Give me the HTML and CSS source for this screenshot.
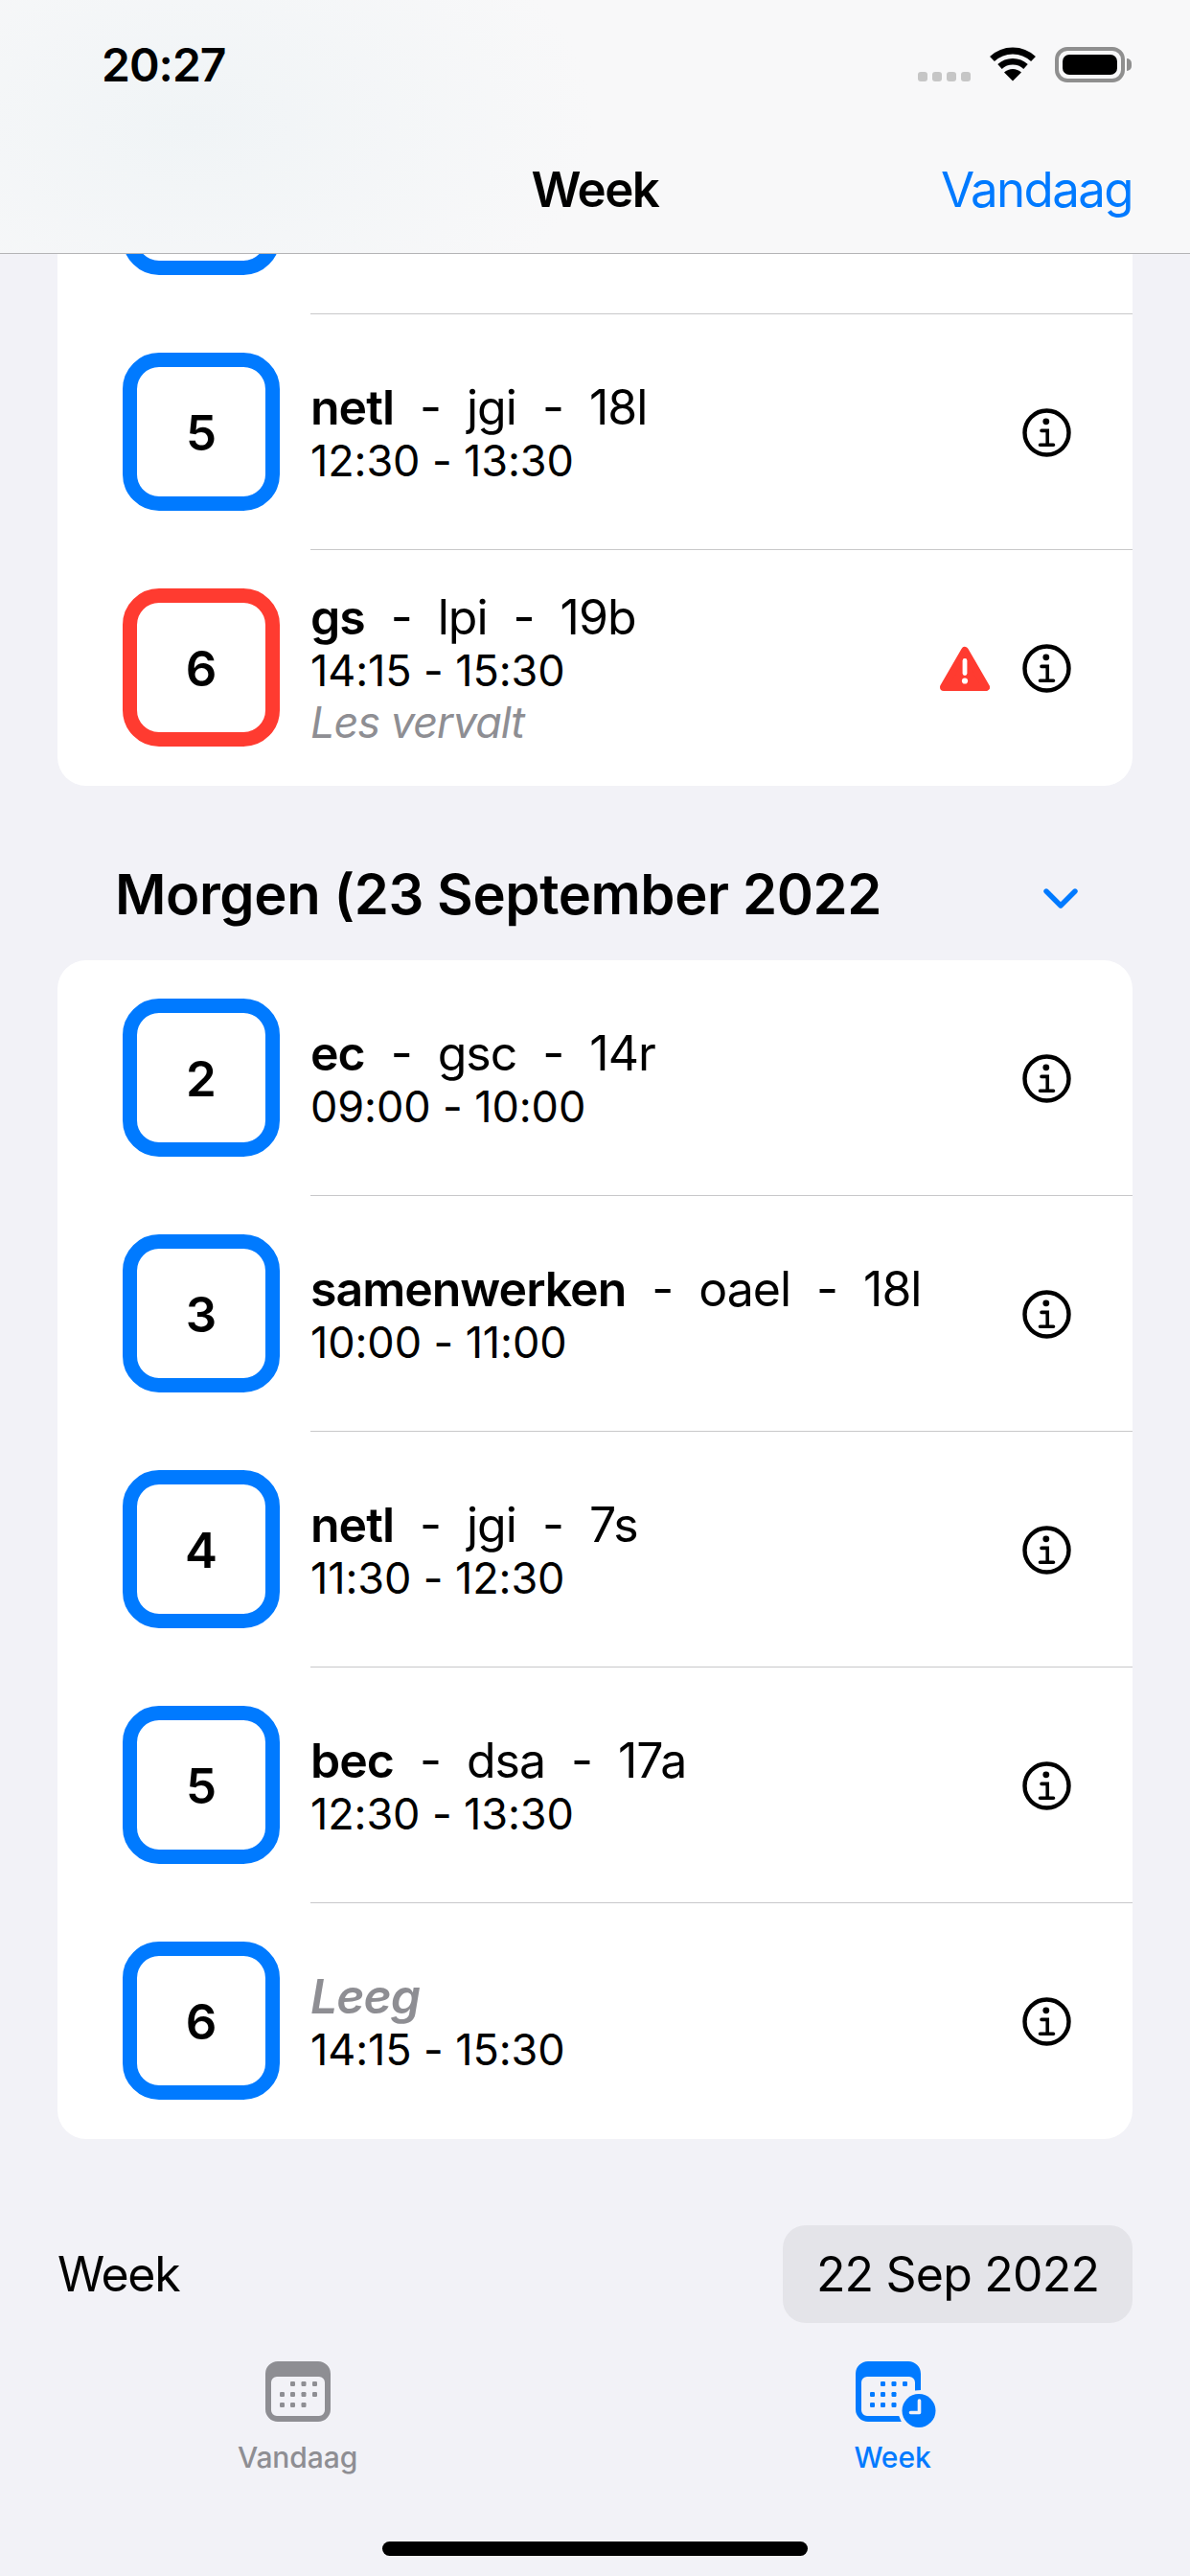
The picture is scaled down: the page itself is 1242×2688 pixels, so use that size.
FILE: index.html
```html
<!DOCTYPE html>
<html lang="nl">

<head>
  <meta charset="UTF-8">
  <meta name="viewport" content="width=device-width, initial-scale=1.0">

  <title>Week</title>
  <link rel="stylesheet" href="styles.css">
</head>

<body>
  <svg class="defs" width="0" height="0" aria-hidden="true">
    <symbol id="info" viewBox="0 0 51 51">
      <circle cx="25.5" cy="25.5" r="23" fill="none" stroke="currentColor" stroke-width="4.4"/>
      <circle cx="24.8" cy="13.8" r="3.4" fill="currentColor"/>
      <path d="M20 23.4h6.2v14.8M18.5 38.2h14" fill="none" stroke="currentColor" stroke-width="3.6" stroke-linecap="round"/>
    </symbol>
    <symbol id="warning" viewBox="0 0 52 48">
      <path d="M26 5 L48 43 H4 Z" fill="#ff3b30" stroke="#ff3b30" stroke-width="8" stroke-linejoin="round"/>
      <rect x="23.6" y="13" width="4.8" height="18" rx="2.4" fill="#fff"/>
      <circle cx="26" cy="36.5" r="3.1" fill="#fff"/>
    </symbol>
  </svg>

  <header class="nav">
    <div class="status">
      <span class="clock">20:27</span>
      <div class="status-icons">
        <div class="signal"><i></i><i></i><i></i><i></i></div>
        <svg class="wifi" viewBox="0 0 48 36" width="48" height="36">
          <path d="M2.5 12.5C14.5 1 33.5 1 45.5 12.5" fill="none" stroke="#000" stroke-width="7"/>
          <path d="M10.5 20.5C18 13.5 30 13.5 37.5 20.5" fill="none" stroke="#000" stroke-width="6.5"/>
          <path d="M24 35.5L15 26.5C20 21.8 28 21.8 33 26.5Z" fill="#000"/>
        </svg>
        <div class="battery"><div class="battery-fill"></div></div>
      </div>
    </div>
    <div class="nav-row">
      <span></span>
      <h1 class="nav-title">Week</h1>
      <a class="nav-action">Vandaag</a>
    </div>
  </header>

  <main class="content">
    <section class="card">
      <div class="row">
        <div class="period"></div>
        <div class="row-body"></div>
      </div>
      <div class="row">
        <div class="period">5</div>
        <div class="row-body">
          <div class="lesson">
            <div class="lesson-title"><b>netl</b><span>-</span><span>jgi</span><span>-</span><span>18l</span></div>
            <div class="lesson-time">12:30 - 13:30</div>
          </div>
          <svg class="info"><use href="#info"/></svg>
        </div>
      </div>
      <div class="row">
        <div class="period period-red">6</div>
        <div class="row-body">
          <div class="lesson">
            <div class="lesson-title"><b>gs</b><span>-</span><span>lpi</span><span>-</span><span>19b</span></div>
            <div class="lesson-time">14:15 - 15:30</div>
            <div class="lesson-note">Les vervalt</div>
          </div>
          <svg class="warning"><use href="#warning"/></svg>
          <svg class="info"><use href="#info"/></svg>
        </div>
      </div>
    </section>

    <div class="day-header">
      <h2 class="day-title">Morgen (23 September 2022</h2>
      <svg class="chevron" viewBox="0 0 36 21" width="36" height="21">
        <path d="M3 3L18 18L33 3" fill="none" stroke="#007aff" stroke-width="5.4" stroke-linecap="round" stroke-linejoin="round"/>
      </svg>
    </div>

    <section class="card">
      <div class="row">
        <div class="period">2</div>
        <div class="row-body">
          <div class="lesson">
            <div class="lesson-title"><b>ec</b><span>-</span><span>gsc</span><span>-</span><span>14r</span></div>
            <div class="lesson-time">09:00 - 10:00</div>
          </div>
          <svg class="info"><use href="#info"/></svg>
        </div>
      </div>
      <div class="row">
        <div class="period">3</div>
        <div class="row-body">
          <div class="lesson">
            <div class="lesson-title"><b>samenwerken</b><span>-</span><span>oael</span><span>-</span><span>18l</span></div>
            <div class="lesson-time">10:00 - 11:00</div>
          </div>
          <svg class="info"><use href="#info"/></svg>
        </div>
      </div>
      <div class="row">
        <div class="period">4</div>
        <div class="row-body">
          <div class="lesson">
            <div class="lesson-title"><b>netl</b><span>-</span><span>jgi</span><span>-</span><span>7s</span></div>
            <div class="lesson-time">11:30 - 12:30</div>
          </div>
          <svg class="info"><use href="#info"/></svg>
        </div>
      </div>
      <div class="row">
        <div class="period">5</div>
        <div class="row-body">
          <div class="lesson">
            <div class="lesson-title"><b>bec</b><span>-</span><span>dsa</span><span>-</span><span>17a</span></div>
            <div class="lesson-time">12:30 - 13:30</div>
          </div>
          <svg class="info"><use href="#info"/></svg>
        </div>
      </div>
      <div class="row">
        <div class="period">6</div>
        <div class="row-body">
          <div class="lesson">
            <div class="lesson-title"><em class="empty">Leeg</em></div>
            <div class="lesson-time">14:15 - 15:30</div>
          </div>
          <svg class="info"><use href="#info"/></svg>
        </div>
      </div>
    </section>

    <div class="week-picker">
      <span class="week-label">Week</span>
      <span class="date-pill">22 Sep 2022</span>
    </div>
  </main>

  <nav class="tabs">
    <div class="tab">
      <svg class="tab-icon" viewBox="0 0 84 70" width="84" height="70">
        <path fill-rule="evenodd" fill="#8e8e93" d="M21 0h42a13 13 0 0 1 13 13v37a13 13 0 0 1-13 13H21a13 13 0 0 1-13-13V13A13 13 0 0 1 21 0ZM20 16a6 6 0 0 0-6 6v29a6 6 0 0 0 6 6h44a6 6 0 0 0 6-6V22a6 6 0 0 0-6-6Z"/>
        <g fill="#8e8e93">
          <rect x="34" y="21" width="5" height="5" rx="1.2"/><rect x="45.5" y="21" width="5" height="5" rx="1.2"/><rect x="57" y="21" width="5" height="5" rx="1.2"/>
          <rect x="23" y="32" width="5" height="5" rx="1.2"/><rect x="34" y="32" width="5" height="5" rx="1.2"/><rect x="45.5" y="32" width="5" height="5" rx="1.2"/><rect x="57" y="32" width="5" height="5" rx="1.2"/>
          <rect x="23" y="43" width="5" height="5" rx="1.2"/><rect x="34" y="43" width="5" height="5" rx="1.2"/><rect x="45.5" y="43" width="5" height="5" rx="1.2"/>
        </g>
      </svg>
      <span class="tab-label">Vandaag</span>
    </div>
    <div class="tab tab-active">
      <svg class="tab-icon" viewBox="0 0 84 70" width="84" height="70">
        <path fill="#007aff" d="M21 0h42a13 13 0 0 1 13 13v17l-6 .4V22a6 6 0 0 0-6-6H20a6 6 0 0 0-6 6v29a6 6 0 0 0 6 6h33.2l2.6 6H21a13 13 0 0 1-13-13V13A13 13 0 0 1 21 0Z"/>
        <g fill="#007aff">
          <rect x="34" y="21" width="5" height="5" rx="1.2"/><rect x="45.5" y="21" width="5" height="5" rx="1.2"/><rect x="57" y="21" width="5" height="5" rx="1.2"/>
          <rect x="23" y="32" width="5" height="5" rx="1.2"/><rect x="34" y="32" width="5" height="5" rx="1.2"/><rect x="45.5" y="32" width="5" height="5" rx="1.2"/>
          <rect x="23" y="43" width="5" height="5" rx="1.2"/><rect x="34" y="43" width="5" height="5" rx="1.2"/><rect x="45.5" y="43" width="5" height="5" rx="1.2"/>
        </g>
        <circle cx="74" cy="51.5" r="17.5" fill="#007aff"/>
        <path d="M74.5 41v12.5h-9" fill="none" stroke="#f2f2f7" stroke-width="3.6" stroke-linecap="round" stroke-linejoin="round"/>
      </svg>
      <span class="tab-label">Week</span>
    </div>
  </nav>

  <div class="home-bar"></div>
</body>
</html>
```

FILE: styles.css
```css
/* Week schedule screen */

* {
  box-sizing: border-box;
}

html,
body {
  margin: 0;
  height: 2688px;
  overflow: hidden;
}

body {
  display: flex;
  flex-direction: column;
  background-color: #f2f2f7;
  color: #000;
  font-family: "Inter", "Noto Sans", sans-serif;
}

.defs {
  position: absolute;
}

/* Top bar */

.nav {
  position: relative;
  z-index: 1;
  flex: none;
  height: 265px;
  background-color: #f8f8f9;
  background-image: radial-gradient(ellipse 420px 260px at 200px 130px, #f0f4f6, transparent);
  border-bottom: 1px solid #b4b4b6;
}

.status {
  display: flex;
  justify-content: space-between;
  align-items: flex-start;
  height: 167px;
  padding: 49px 68px 0 106px;
}

.clock {
  font-size: 48px;
  line-height: 38px;
  font-weight: 600;
  letter-spacing: -1px;
}

.status-icons {
  display: flex;
  align-items: flex-start;
}

.signal {
  display: flex;
  gap: 5px;
  margin: 26px 20px 0 0;
}

.signal i {
  width: 10px;
  height: 10px;
  border-radius: 3px;
  background-color: #c6c6c6;
}

.wifi {
  margin-right: 20px;
}

.battery {
  position: relative;
  width: 73px;
  height: 37px;
  border: 4px solid #8f8f8f;
  border-radius: 13px;
  padding: 4px;
}

.battery::after {
  content: "";
  position: absolute;
  top: 8px;
  right: -11px;
  width: 5px;
  height: 13px;
  border-radius: 0 5px 5px 0;
  background-color: #8f8f8f;
}

.battery-fill {
  height: 100%;
  border-radius: 7px;
  background-color: #000;
}

.nav-row {
  display: grid;
  grid-template-columns: 1fr auto 1fr;
  align-items: baseline;
  padding: 0 60px;
}

.nav-title {
  margin: 0;
  font-size: 51px;
  font-weight: 600;
  line-height: 62px;
  letter-spacing: -1.5px;
}

.nav-action {
  justify-self: end;
  color: #007aff;
  font-size: 51px;
  line-height: 62px;
  letter-spacing: -1.6px;
}

/* Lesson cards */

.content {
  flex: none;
  margin-top: -183px;
  padding: 0 60px;
}

.card {
  padding-bottom: 1px;
  border-radius: 30px;
  background-color: #fff;
  overflow: hidden;
}

.row {
  display: flex;
  padding-left: 68px;
}

.period {
  flex: none;
  display: flex;
  align-items: center;
  justify-content: center;
  width: 164px;
  height: 165px;
  margin: 40px 0;
  padding-top: 2px;
  border: 15px solid #007aff;
  border-radius: 38px;
  font-size: 51px;
  font-weight: 600;
}

.row + .row .period {
  margin-top: 41px;
}

.period-red {
  border-color: #ff3b30;
}

.row-body {
  flex: 1;
  display: flex;
  align-items: center;
  margin-left: 32px;
  padding-top: 2px;
  padding-right: 64px;
}

.row + .row .row-body {
  border-top: 1px solid #c8c8ca;
}

.lesson {
  flex: 1;
}

.lesson-title {
  display: flex;
  gap: 27px;
  font-size: 50px;
  line-height: 58px;
  letter-spacing: -1px;
}

.lesson-title b {
  font-weight: 600;
}

.lesson-title .empty {
  color: #8e8e93;
  font-weight: 600;
}

.lesson-time {
  font-size: 45px;
  line-height: 54px;
  letter-spacing: -0.1px;
}

.lesson-note {
  color: #8e8e93;
  font-size: 45px;
  font-style: italic;
  line-height: 54px;
  letter-spacing: -1px;
}

.warning {
  flex: none;
  width: 52px;
  height: 48px;
  margin-right: 34px;
}

.info {
  flex: none;
  width: 51px;
  height: 51px;
}

/* Day header */

.day-header {
  display: flex;
  align-items: flex-end;
  justify-content: space-between;
  height: 182px;
  padding: 0 57px 33px 60px;
}

.day-title {
  margin: 0;
  font-size: 58px;
  font-weight: 600;
  line-height: 72px;
  letter-spacing: -0.4px;
}

.chevron {
  margin-bottom: 21px;
}

/* Date picker row */

.week-picker {
  display: flex;
  align-items: center;
  justify-content: space-between;
  margin-top: 90px;
  font-size: 50px;
  letter-spacing: -0.8px;
}

.week-label {
  letter-spacing: -1.3px;
}

.date-pill {
  display: flex;
  align-items: center;
  justify-content: center;
  width: 365px;
  height: 102px;
  border-radius: 24px;
  background-color: #e4e4e9;
}

/* Tab bar */

.tabs {
  flex: none;
  display: grid;
  grid-template-columns: 1fr 1fr;
  margin-top: 40px;
}

.tab {
  display: flex;
  flex-direction: column;
  align-items: center;
  color: #8e8e93;
}

.tab-active {
  color: #007aff;
}

.tab-icon {
  display: block;
  overflow: visible;
}

.tab-active .tab-icon {
  margin-left: -9px;
}

.tab-label {
  margin-top: 12px;
  font-size: 30px;
  font-weight: 500;
  line-height: 36px;
  letter-spacing: -0.1px;
}

.home-bar {
  align-self: center;
  flex: none;
  width: 444px;
  height: 15px;
  margin-top: 70px;
  border-radius: 8px;
  background-color: #000;
}
```
